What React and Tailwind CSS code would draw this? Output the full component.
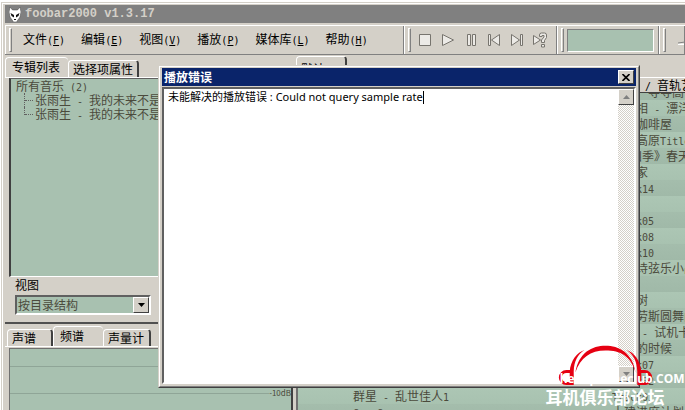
import { Fragment } from "react";

const menus = [
  ["文件", "F"],
  ["编辑", "E"],
  ["视图", "V"],
  ["播放", "P"],
  ["媒体库", "L"],
  ["帮助", "H"],
];

const icons = [
  { name: "停止", d: "M2.5 2.5h11v11h-11z" },
  { name: "播放", d: "M2.5 2.5v11l11-5.5z" },
  { name: "暂停", d: "M4.5 2.5h3v11h-3zM9.5 2.5h3v11h-3z" },
  { name: "上一个", d: "M2.5 2.5h2v11h-2zM13.5 2.5v11l-8-5.5z" },
  { name: "下一个", d: "M2.5 2.5v11l8-5.5zM11.5 2.5h2v11h-2z" },
  {
    name: "随机",
    d: "M1.5 3.5v9l7-4.5zM7.500 4.500V3q0-2 2-2h3q2 0 2 2v2.500l-2 3v2h-3V8l2.500-3V3.500h-2v1zM9.500 12.500h3v2.500h-3z",
  },
];

const tracks = [
  "    相 - 漂洋过海",
  "    咖啡屋",
  "    高原Title",
  "   四季》春天",
  "    家",
  "Track14",
  "",
  "Track05",
  "Track08",
  "Track10",
  "    诗弦乐小品",
  "",
  "    树",
  "    劳斯圆舞曲",
  "     - 试机卡",
  "    的时候",
  "Track07",
  "Track02",
];

const message = "未能解决的播放错误 : ";
const reason = "Could not query sample rate";

// Latin runs are half as wide as the Chinese glyphs
const Mixed = ({ text }) =>
  text.split(/([\x20-\x7e]+)/).map((part, i) =>
    i % 2 ? (
      <span key={i} className="font-['DejaVu_Sans_Mono'] text-[10px]">
        {part}
      </span>
    ) : (
      <Fragment key={i}>{part}</Fragment>
    )
  );

const Grip = () => (
  <div className="h-6 w-[3px] shrink-0 border border-white border-r-[#808080] border-b-[#808080]" />
);

const Band = ({ className, children }) => (
  <div
    className={`flex h-full items-center border-r border-r-[#808080] border-l border-l-white pl-[3px] ${className}`}
  >
    <Grip />
    {children}
  </div>
);

const Tab = ({ active, className = "", children }) => (
  <button
    className={`rounded-t-sm border-t border-l border-white text-left leading-4 ${
      active
        ? "h-5 bg-[#d4d0c8] px-[6px] pb-[2px]"
        : "h-[17px] border-r-2 border-r-[#404040] px-1"
    } ${className}`}
  >
    {children}
  </button>
);

const AlienIcon = () => (
  <svg className="h-[15px] w-3" viewBox="0 0 12 15">
    <path
      d="M1 0l2.500 3h5L11 0l1 5-1 5-3.500 5h-3L1 10 0 5z"
      fill="#fff"
      stroke="#444"
      strokeWidth=".5"
    />
    <path d="M1.500 6l3.500 2v2.500L2.500 9zM10.500 6L7 8v2.500L9.500 9zM5 12h2v1H5z" fill="#111" />
  </svg>
);

const MenuBar = () => (
  <div className="flex h-[30px] border-t border-b border-t-white border-b-[#808080]">
    <Band className="w-[399px] shrink-0">
      <nav className="flex gap-4 pl-[11px]">
        {menus.map(([label, key]) => (
          <button key={key} className="leading-4">
            {label}
            <span className="font-['DejaVu_Sans_Mono'] text-[10px]">
              (<u>{key}</u>)
            </span>
          </button>
        ))}
      </nav>
    </Band>
    <Band className="w-[153px] shrink-0">
      <div className="flex pl-[2px]">
        {icons.map((icon) => (
          <button
            key={icon.name}
            aria-label={icon.name}
            className="flex w-[23px] justify-center"
          >
            <svg className="size-4" viewBox="0 0 16 16">
              <path d={icon.d} fill="#eceae6" stroke="#77746e" />
            </svg>
          </button>
        ))}
      </div>
    </Band>
    <Band className="w-[102px] shrink-0">
      <div className="ml-[3px] h-[23px] w-[87px] border border-t-[#808080] border-r-white border-b-white border-l-[#808080] bg-[#a8c1b0]" />
    </Band>
    <Band className="min-w-0 flex-1 overflow-hidden">
      <svg className="ml-3 h-3 w-16 shrink-0" viewBox="0 0 64 12">
        <path d="M0 9L64 0v10H0z" fill="#e8e6e2" />
        <path d="M0 9L64 0" stroke="#808080" />
        <path d="M0 10.500h64" stroke="#fff" />
      </svg>
    </Band>
  </div>
);

const AlbumPanel = () => (
  <section className="flex h-[269px] flex-col border-b-2 border-[#505050] pt-[2px]">
    <div className="flex items-end">
      <Tab active className="w-[63px]">专辑列表</Tab>
      <Tab className="w-[71px]">选择项属性</Tab>
    </div>
    <div className="flex flex-1 flex-col border-t border-white pr-2 pl-1">
      <ul className="h-[199px] border-t border-l-2 border-b border-t-[#606060] border-b-white border-l-[#404040] bg-[#a8c1b0] pl-[5px] leading-[14px] whitespace-nowrap text-[#4b4a3c]">
        <li className="h-[14px]">
          <Mixed text="所有音乐 (2)" />
        </li>
        {[1, 2].map((n) => (
          <li key={n} className="ml-2 flex h-[14px]">
            <span
              className={`border-l border-dotted border-[#606060] ${n === 2 ? "h-2" : "h-full"}`}
            />
            <span className="mt-[7px] mr-[2px] w-2 border-t border-dotted border-[#606060]" />
            <span>
              <Mixed text="张雨生 - 我的未来不是梦" />
            </span>
          </li>
        ))}
      </ul>
      <label htmlFor="view" className="ml-[6px] leading-[16px]">
        视图
      </label>
      <div className="relative mt-[2px] ml-[6px] w-[136px]">
        <select
          id="view"
          className="block h-5 w-full appearance-none rounded-none border-2 border-t-[#606060] border-r-white border-b-white border-l-[#606060] bg-[#a8c1b0] pl-[1px] leading-4 text-[#4b4a3c]"
        >
          <option>按目录结构</option>
        </select>
        <span className="pointer-events-none absolute top-[2px] right-[2px] flex h-4 w-4 items-center justify-center border border-t-white border-r-[#404040] border-b-[#404040] border-l-white bg-[#d4d0c8]">
          <svg className="h-1 w-[7px]" viewBox="0 0 7 4">
            <path d="M0 0h7L3.500 4z" />
          </svg>
        </span>
      </div>
    </div>
  </section>
);

const SpectrumPanel = () => (
  <section className="flex flex-1 flex-col pt-[2px]">
    <div className="flex items-end">
      <Tab className="ml-[2px] w-[46px] border-r-0">声谱</Tab>
      <Tab active className="w-[50px]">频谱</Tab>
      <Tab className="w-[48px]">声量计</Tab>
    </div>
    <div className="flex flex-1 flex-col border-t border-white pt-[1px] pl-1">
      <div className="flex-1 border-t border-l border-[#707070] bg-[#a8c1b0]">
        <div className="h-[18px] border-b border-[#8fa597]" />
        <div className="h-[27px] border-b border-[#8fa597]" />
        <div className="-mt-[6px] text-right text-[8px] leading-[10px] text-[#4b4a3c]">
          <span className="bg-[#a8c1b0]">-10dB</span>
        </div>
      </div>
    </div>
  </section>
);

const Row = ({ artist = "", title, index = 0 }) => (
  <li
    className={`flex h-4 shrink-0 leading-4 whitespace-pre ${
      index % 2
        ? "bg-linear-to-b from-[#a4bdac] to-[#a0b9a8]"
        : "bg-linear-to-b from-[#acc6b4] to-[#a8c2b0]"
    }`}
  >
    <span className="w-[314px] shrink-0 pl-[55px]">
      <Mixed text={artist} />
    </span>
    <span>
      <Mixed text={title} />
    </span>
  </li>
);

const Playlist = () => (
  <section className="flex min-w-0 flex-1 flex-col pt-[1px]">
    <div className="flex h-[22px] border-b border-white">
      <Tab className="w-[51px] self-start pt-1">默认</Tab>
    </div>
    <div className="flex flex-1 flex-col overflow-hidden border-l-2 border-[#707070]">
      <div className="h-[15px] shrink-0 border-b border-[#404040] pl-[347px] leading-[14px] whitespace-pre text-black">
        <Mixed text="/ 音轨艺术家" />
      </div>
      <ul className="flex flex-col overflow-hidden text-[#4b4a3c]">
        <li className="flex h-[7px] shrink-0 items-end overflow-hidden bg-[#a0b9a8] pl-[350px] leading-4 whitespace-nowrap">
          寻寻高
        </li>
        {tracks.map((title, i) => (
          <Row key={i} index={i} title={title} />
        ))}
        <Row index={0} artist="群星 - 乱世佳人1" title="Track01" />
        <Row index={1} artist="Guo Gan" title="土建进度计划" />
      </ul>
    </div>
  </section>
);

const ScrollButton = ({ label, d }) => (
  <button
    aria-label={label}
    className="flex h-4 w-4 items-center justify-center border border-t-white border-r-[#404040] border-b-[#404040] border-l-white bg-[#d4d0c8]"
  >
    <svg className="h-1 w-[7px]" viewBox="0 0 7 4">
      <path d={d} fill="#808080" />
    </svg>
  </button>
);

const ErrorDialog = () => (
  <div
    role="dialog"
    aria-labelledby="error-title"
    className="absolute top-[65px] left-[158px] h-[323px] w-[482px] border border-t-[#d4d0c8] border-r-[#404040] border-b-[#404040] border-l-[#d4d0c8] bg-[#d4d0c8]"
  >
    <div className="flex h-full flex-col border border-t-white border-r-[#808080] border-b-[#808080] border-l-white p-[2px] pt-[1px]">
      <div className="flex h-[18px] shrink-0 items-center justify-between bg-[#0a246a] pr-[2px] pl-[2px] text-white">
        <h1 id="error-title" className="text-[12px] leading-4 font-bold">
          播放错误
        </h1>
        <button
          aria-label="关闭"
          className="flex h-[14px] w-4 items-center justify-center border border-t-white border-r-[#404040] border-b-[#404040] border-l-white bg-[#d4d0c8]"
        >
          <svg className="h-[7px] w-2" viewBox="0 0 8 7">
            <path d="M.5 0L7.500 7M7.500 0L.5 7" stroke="#000" strokeWidth="1.600" />
          </svg>
        </button>
      </div>
      <div className="mt-[1px] flex flex-1 border-2 border-t-[#606060] border-r-white border-b-white border-l-[#606060] bg-white">
        <div className="relative flex-1 font-['Noto_Sans','Noto_Sans_CJK_SC',sans-serif] text-[11px] leading-4">
          <textarea
            aria-labelledby="error-title"
            readOnly
            className="block h-full w-full resize-none pl-1 outline-none"
            defaultValue={message + reason}
          />
          <div
            aria-hidden="true"
            className="pointer-events-none absolute inset-x-0 top-0 flex items-center pl-1"
          >
            <span className="invisible">{message + reason}</span>
            <span className="h-[13px] border-l border-black" />
          </div>
        </div>
        <div className="flex w-4 flex-col justify-between bg-[repeating-conic-gradient(#d4d0c8_0_25%,#fff_0_50%)] bg-[length:2px_2px]">
          <ScrollButton label="向上滚动" d="M3.500 0L7 4H0z" />
          <ScrollButton label="向下滚动" d="M0 0h7L3.500 4z" />
        </div>
      </div>
    </div>
  </div>
);

const HeadphoneSide = () => (
  <>
    <path d="M38 122V82C40 50 60 25 82 18 62 32 51 50 50 82v40z" fill="#e60012" />
    <path d="M40 82H28a17 17 0 0 0 0 36h12" fill="none" stroke="#e60012" strokeWidth="9" />
  </>
);

const Watermark = () => (
  <div className="pointer-events-none absolute right-1 bottom-[2px] flex w-[152px] flex-col items-center font-bold whitespace-nowrap text-white">
    <svg className="h-[42px] w-[97px]" viewBox="0 0 290 125">
      <HeadphoneSide />
      <g transform="translate(290 0) scale(-1 1)">
        <HeadphoneSide />
      </g>
      <path
        d="M55 85C65 25 105 5 145 5s80 20 90 80C220 35 190 19 145 19S70 40 55 85z"
        fill="#e60012"
      />
    </svg>
    <span className="-mt-[14px] font-['Open_Sans'] text-[12px] leading-[14px]">
      www.headphoneclub.COM
    </span>
    <span className="text-[17px] leading-[22px]">耳机俱乐部论坛</span>
  </div>
);

const App = () => {
  return (
    <div className="relative h-screen overflow-hidden bg-white pt-[2px] pl-[1px] font-['Noto_Sans_CJK_SC',sans-serif] text-[12px] text-black">
      <div className="flex h-full flex-col border-t border-l border-[#d4d0c8] bg-[#d4d0c8]">
        <div className="flex min-h-0 flex-1 flex-col border-t border-l border-white pt-[1px] pl-[2px]">
          <header className="flex h-[18px] shrink-0 items-center gap-1 bg-[#808080] pl-1 text-[#d4d0c8]">
            <AlienIcon />
            <span className="font-['Liberation_Mono'] text-[12px] font-bold">
              foobar2000 v1.3.17
            </span>
          </header>
          <div className="mt-[2px] shrink-0">
            <MenuBar />
          </div>
          <main className="flex min-h-0 flex-1">
            <div className="flex w-[286px] shrink-0 flex-col">
              <AlbumPanel />
              <SpectrumPanel />
            </div>
            <div className="mt-5 w-[5px] shrink-0 border-l-2 border-[#404040]" />
            <Playlist />
          </main>
        </div>
      </div>
      <ErrorDialog />
      <Watermark />
    </div>
  );
};

export default App;
